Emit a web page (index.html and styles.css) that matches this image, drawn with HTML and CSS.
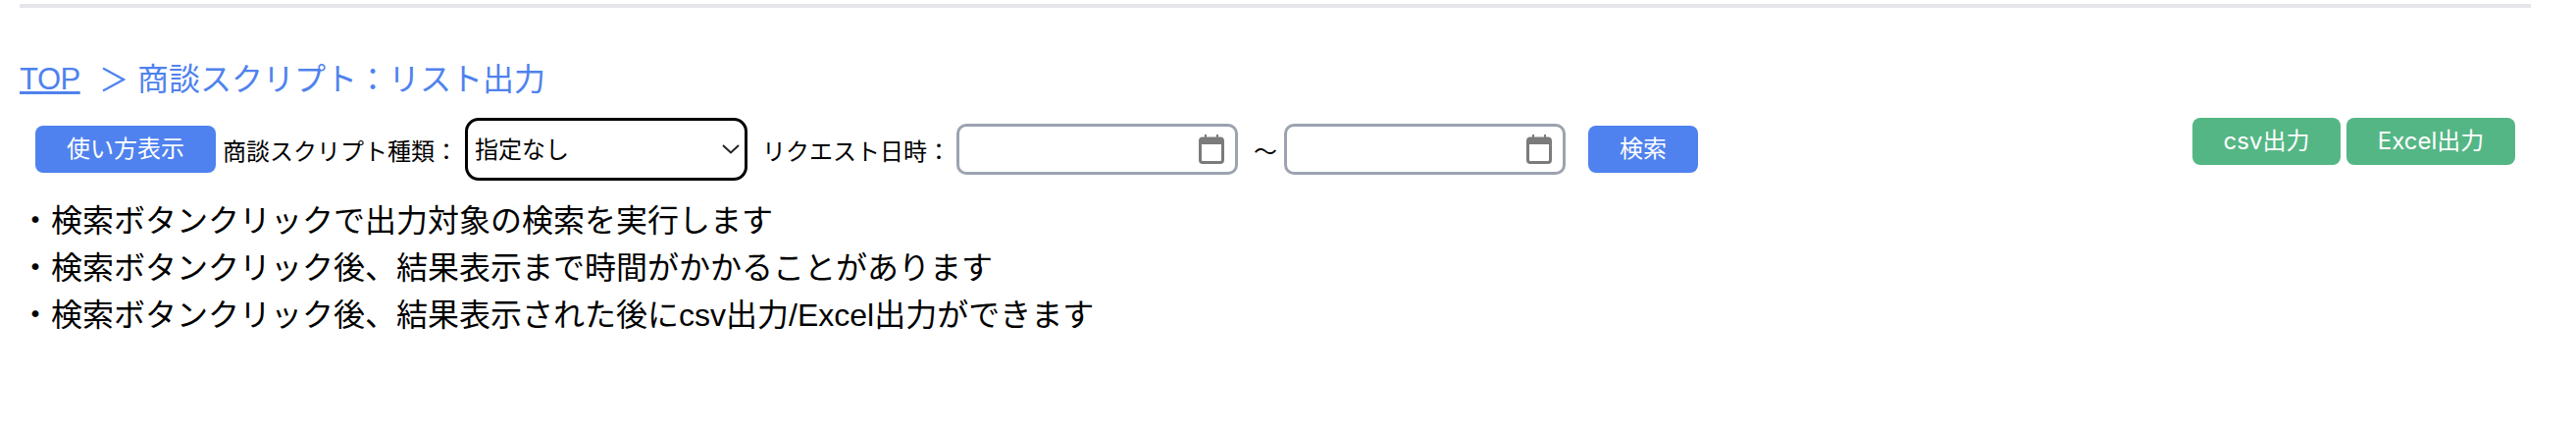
FILE: index.html
```html
<!DOCTYPE html>
<html lang="ja">
<head>
<meta charset="utf-8">
<title>商談スクリプト：リスト出力</title>
<link rel="stylesheet" href="styles.css">
</head>
<body>
<hr class="rule">
<h1 class="crumbs"><a class="crumb-link" href="#">TOP</a><svg class="crumb-sep" width="24" height="26" viewBox="0 0 24 26"><path d="M1 1.500l21 11.500-21 11.500" fill="none" stroke="#4f82ee" stroke-width="2.200"/></svg><span>商談スクリプト：リスト出力</span></h1>
<form class="toolbar">
  <div class="filters">
    <button type="button" class="btn btn-blue btn-help">使い方表示</button>
    <label class="label label-kind">商談スクリプト種類：</label>
    <div class="select-wrap">
      <select class="select"><option>指定なし</option></select>
      <svg class="chevron" width="18" height="10" viewBox="0 0 18 10"><path d="M1 1l8 7.500L17 1" fill="none" stroke="#222" stroke-width="2"/></svg>
    </div>
    <label class="label label-date">リクエスト日時：</label>
    <div class="date">
      <svg class="cal" width="26" height="30" viewBox="0 0 26 30"><path d="M6 0h2v4H6zM18 0h2v4h-2z" fill="#7b7b7b"/><rect x="1.500" y="4" width="23" height="24.500" rx="2.500" fill="#fff" stroke="#7b7b7b" stroke-width="3"/><path d="M1 4h24v6H1z" fill="#7b7b7b"/></svg>
    </div>
    <span class="tilde">〜</span>
    <div class="date">
      <svg class="cal" width="26" height="30" viewBox="0 0 26 30"><path d="M6 0h2v4H6zM18 0h2v4h-2z" fill="#7b7b7b"/><rect x="1.500" y="4" width="23" height="24.500" rx="2.500" fill="#fff" stroke="#7b7b7b" stroke-width="3"/><path d="M1 4h24v6H1z" fill="#7b7b7b"/></svg>
    </div>
    <button type="button" class="btn btn-blue btn-search">検索</button>
  </div>
  <div class="exports">
    <button type="button" class="btn btn-green btn-csv">csv出力</button>
    <button type="button" class="btn btn-green btn-excel">Excel出力</button>
  </div>
</form>
<ul class="notes">
  <li>・検索ボタンクリックで出力対象の検索を実行します</li>
  <li>・検索ボタンクリック後、結果表示まで時間がかかることがあります</li>
  <li>・検索ボタンクリック後、結果表示された後にcsv出力/Excel出力ができます</li>
</ul>
</body>
</html>
```
FILE: styles.css
```css
* { box-sizing: border-box; }
html, body { margin: 0; padding: 0; background: #fff; }
body {
  font-family: "Liberation Sans", "Noto Sans CJK JP", sans-serif;
  color: #000;
}
.rule {
  height: 4px;
  margin: 4px 46px 0 20px;
  border: 0;
  background: #e5e5ea;
}
.crumbs {
  display: flex;
  align-items: center;
  margin: 49px 0 0 20px;
  height: 48px;
  font-size: 32px;
  font-weight: 400;
  line-height: 48px;
  color: #4f82ee;
}
.crumb-link { width: 62px; color: #4f82ee; font-size: 31px; letter-spacing: -0.500px; text-decoration: underline; }
.crumb-sep { margin: 0 12px 0 22px; }
.toolbar {
  display: flex;
  justify-content: space-between;
  margin: 15px 62px 0 36px;
  height: 64px;
}
.filters { display: flex; align-items: center; }
.exports { display: flex; gap: 6px; align-items: flex-start; }
.btn {
  display: block;
  height: 48px;
  border: 0;
  border-radius: 8px;
  padding: 0;
  color: #fff;
  font-size: 24px;
  font-family: "Liberation Sans", "Noto Sans CJK JP", sans-serif;
  line-height: 48px;
}
.btn-blue { background: #4f82ee; }
.btn-green {
  background: #55b685;
  font-family: Inter, "Noto Sans CJK JP", sans-serif;
}
.btn-help { width: 184px; }
.btn-search { width: 112px; margin-left: 23px; }
.btn-csv { width: 151px; }
.btn-excel { width: 172px; }
.label { font-size: 24px; white-space: nowrap; }
.label-kind { width: 247px; margin-left: 7px; }
.label-date { width: 198px; margin-left: 15px; }
.select-wrap { position: relative; width: 288px; height: 64px; }
.select {
  display: block;
  width: 100%;
  height: 100%;
  padding: 0 0 0 7px;
  border: 3px solid #000;
  border-radius: 14px;
  background: #fff;
  appearance: none;
  color: #000;
  font-size: 24px;
  font-family: "Liberation Sans", "Noto Sans CJK JP", sans-serif;
}
.chevron { position: absolute; top: 27px; right: 8px; }
.date {
  display: flex;
  align-items: center;
  justify-content: flex-end;
  width: 287px;
  height: 52px;
  padding-right: 11px;
  border: 3px solid #9ca3af;
  border-radius: 10px;
  background: #fff;
}
.cal { display: block; }
.tilde { width: 47px; padding-left: 16px; font-size: 24px; }
.notes {
  margin: 17px 0 0 20px;
  padding: 0;
  list-style: none;
  font-size: 32px;
  line-height: 48px;
}
```
